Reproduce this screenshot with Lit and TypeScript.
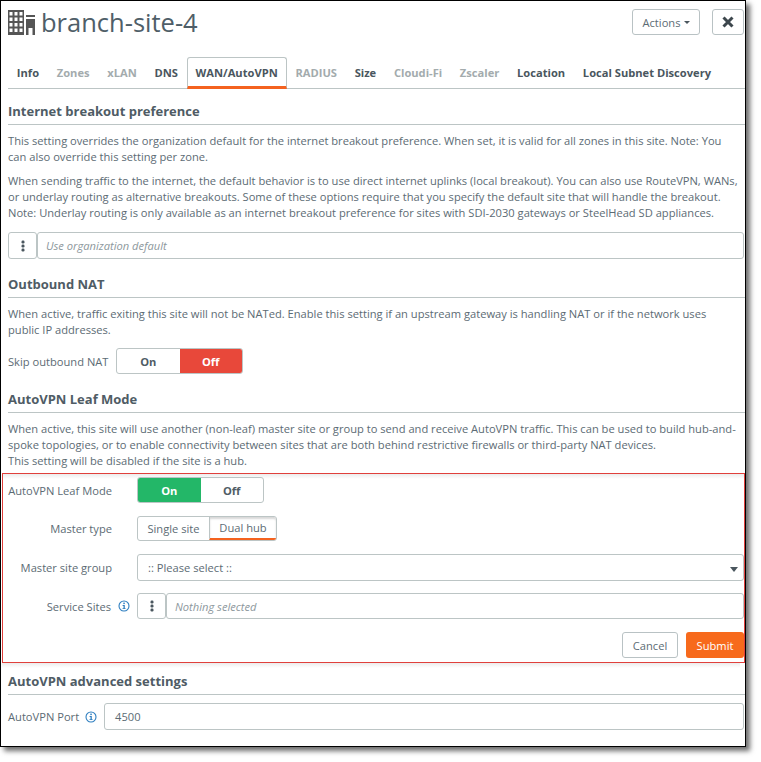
import { LitElement, html, css, svg } from "lit";
import { customElement } from "lit/decorators.js";

const info = html`<svg class="info" viewBox="0 0 12 12" width="12" height="12"><circle cx="6" cy="6" r="5" fill="none" stroke="#2f7fc0" stroke-width="1.1"/><rect x="5.3" y="2.6" width="1.5" height="1.5" fill="#2f7fc0"/><path d="M4.6 5h2.2v3.2h.8v.9H4.5v-.9h1V5.900h-.9z" fill="#2f7fc0"/></svg>`;
const dots = html`<svg viewBox="0 0 4 12" width="4" height="12"><rect x="0.500" y="0.500" width="3" height="3" rx="1.200" fill="#4a565e"/><rect x="0.500" y="4.500" width="3" height="3" rx="1.200" fill="#4a565e"/><rect x="0.500" y="8.500" width="3" height="3" rx="1.200" fill="#4a565e"/></svg>`;
const cells = [0, 1, 2].flatMap((c) => [0, 1, 2, 3].map((r) => svg`<rect x="${1.5 + c * 5}" y="${2 + r * 5.500}" width="3" height="3.500" fill="#fff"/>`));

@customElement("app-root")
export class AppRoot extends LitElement {
  static styles = css`
    :host { display: block; width: 761px; height: 762px; background: #fff; font-family: "Open Sans", sans-serif; font-size: 11.15px; color: #5c6b74; overflow: hidden; }
    * { box-sizing: border-box; }
    .window { width: 746px; height: 747px; border: 1px solid #000; box-shadow: 4px 4px 5px #6d6d6d; background: #fff; padding: 8px 1px 0 7px; }
    .top { display: flex; align-items: center; height: 26px; }
    .title { font-size: 25.5px; line-height: 26px; color: #4f5e68; margin-left: 6px; flex: 1; }
    .btn { height: 26px; border: 1px solid #b9c2c4; border-radius: 3px; background: #fff; display: flex; align-items: center; justify-content: center; color: #5c6b74; }
    .actions { width: 68px; margin-right: 12px; gap: 3px; }
    .caret { width: 0; height: 0; border: 3px solid transparent; border-top-color: #4a565e; border-bottom: 0; }
    .close { width: 32px; }
    .tabs { display: flex; margin: 22px 0 0 0; height: 32px; width: 737px; border-bottom: 1px solid #bcc5c5; }
    .tab { padding: 0 8.850px; height: 32px; line-height: 32px; font-weight: 700; color: #4a565e; white-space: nowrap; }
    .tab.dim { color: #a3abad; }
    .tab.active { border: 1px solid #bcc5c5; border-bottom: 3px solid #f4621f; border-radius: 3px 3px 0 0; padding: 0 7.850px; line-height: 29px; background: #fff; }
    h3 { margin: 0; font-size: 13px; font-weight: 700; color: #4f5c65; height: 27px; line-height: 26px; border-bottom: 1px solid #bcc5c5; width: 737px; }
    p { margin: 0; line-height: 16px; width: 732px; }
    .combo { display: flex; height: 27px; width: 736px; }
    .dotbtn { width: 29px; flex: none; border: 1px solid #bcc5c5; border-radius: 3px; display: flex; align-items: center; justify-content: center; background: #fff; }
    .field { flex: 1; border: 1px solid #bcc5c5; border-radius: 3px; display: flex; align-items: center; padding-left: 8px; font-style: italic; color: #8d989d; min-width: 0; position: relative; background: #fff; }
    .field.plain { font-style: normal; color: #5c6b74; padding-left: 10px; }
    .inline { display: flex; align-items: center; }
    .skip { width: 101px; white-space: nowrap; }
    .toggle { display: flex; width: 127px; height: 26px; border: 1px solid #bcc5c5; border-radius: 3px; overflow: hidden; font-weight: 700; color: #4f5c65; }
    .toggle > div { flex: 1; display: flex; align-items: center; justify-content: center; }
    .toggle .red { background: #e8483a; color: #fff; }
    .toggle .green { background: #23b768; color: #fff; }
    .box { margin-left: -6px; width: 743px; height: 190px; border: 1px solid #e0403c; background: linear-gradient(#ececec, #fff 5px); padding: 3px 0 0 0; display: grid; grid-template-columns: 109px 1fr; column-gap: 25px; grid-auto-rows: min-content; }
    .lbl { display: flex; align-items: center; justify-content: flex-end; gap: 7px; white-space: nowrap; }
    .lbl.w { margin-right: -18px; }
    .seg { display: flex; width: 140px; height: 25px; border: 1px solid #bcc5c5; border-radius: 3px; }
    .seg > div { display: flex; align-items: center; justify-content: center; }
    .seg .a { width: 71px; }
    .seg .b { flex: 1; border-left: 1px solid #bcc5c5; border-bottom: 2px solid #f4621f; box-shadow: inset 0 2px 2px #d8d8d8; border-radius: 0 2px 2px 0; }
    .selectarrow { position: absolute; right: 5px; top: 12px; width: 0; height: 0; border: 4.500px solid transparent; border-top: 5px solid #4a565e; border-bottom: 0; }
    .r13 { margin-top: 13px; }
    .r12 { margin-top: 12px; }
    .actions-row { grid-column: 1 / 3; display: flex; justify-content: flex-end; gap: 8px; margin-top: 13px; }
    .cancel { width: 56px; height: 26px; }
    .submit { width: 58px; height: 26px; background: #f76a1c; color: #fff; border-radius: 3px; display: flex; align-items: center; justify-content: center; }
    .after { height: 5px; width: 738px; margin-left: -6px; background: linear-gradient(#ececec, #fff); }
  `;

  render() {
    return html`<div class="window">
      <div class="top">
        <svg width="27" height="25" viewBox="0 0 27 25"><rect x="0" y="0" width="16" height="25" fill="#555"/>${cells}<rect x="18" y="5" width="9" height="2" fill="#555"/><path d="M18 9h9v16h-2.500v-7h-4v7H18z" fill="#555"/></svg>
        <div class="title">branch-site-4</div>
        <div class="btn actions">Actions <span class="caret"></span></div>
        <div class="btn close"><svg width="12" height="12" viewBox="0 0 12 12"><path d="M1.500 1.500l9 9M10.500 1.500l-9 9" stroke="#3d474d" stroke-width="3"/></svg></div>
      </div>
      <div class="tabs">
        <div class="tab">Info</div><div class="tab dim">Zones</div><div class="tab dim">xLAN</div><div class="tab">DNS</div><div class="tab active">WAN/AutoVPN</div><div class="tab dim">RADIUS</div><div class="tab">Size</div><div class="tab dim">Cloudi-Fi</div><div class="tab dim">Zscaler</div><div class="tab">Location</div><div class="tab">Local Subnet Discovery</div>
      </div>
      <h3 style="margin-top:9px">Internet breakout preference</h3>
      <p style="margin-top:8px">This setting overrides the organization default for the internet breakout preference. When set, it is valid for all zones in this site. Note: You can also override this setting per zone.</p>
      <p style="margin-top:8px">When sending traffic to the internet, the default behavior is to use direct internet uplinks (local breakout). You can also use RouteVPN, WANs, or underlay routing as alternative breakouts. Some of these options require that you specify the default site that will handle the breakout. Note: Underlay routing is only available as an internet breakout preference for sites with SDI-2030 gateways or SteelHead SD appliances.</p>
      <div class="combo" style="margin-top:11px"><div class="dotbtn">${dots}</div><div class="field">Use organization default</div></div>
      <h3 style="margin-top:12px">Outbound NAT</h3>
      <p style="margin-top:8px">When active, traffic exiting this site will not be NATed. Enable this setting if an upstream gateway is handling NAT or if the network uses public IP addresses.</p>
      <div class="inline" style="margin-top:10px;gap:7px"><span class="skip">Skip outbound NAT</span><div class="toggle"><div>On</div><div class="red">Off</div></div></div>
      <h3 style="margin-top:12px">AutoVPN Leaf Mode</h3>
      <p style="margin-top:8px">When active, this site will use another (non-leaf) master site or group to send and receive AutoVPN traffic. This can be used to build hub-and-spoke topologies, or to enable connectivity between sites that are both behind restrictive firewalls or third-party NAT devices.<br>This setting will be disabled if the site is a hub.</p>
      <div class="box" style="margin-top:4px">
        <div class="lbl">AutoVPN Leaf Mode</div><div><div class="toggle"><div class="green">On</div><div>Off</div></div></div>
        <div class="lbl r13">Master type</div><div class="r13"><div class="seg"><div class="a">Single site</div><div class="b">Dual hub</div></div></div>
        <div class="lbl r13">Master site group</div><div class="r13"><div class="field plain" style="height:27px;width:607px">:: Please select ::<span class="selectarrow"></span></div></div>
        <div class="lbl w r12">Service Sites ${info}</div><div class="r12"><div class="combo" style="width:607px;height:26px"><div class="dotbtn">${dots}</div><div class="field">Nothing selected</div></div></div>
        <div class="actions-row"><div class="btn cancel">Cancel</div><div class="submit">Submit</div></div>
      </div>
      <div class="after"></div>
      <h3>AutoVPN advanced settings</h3>
      <div class="inline" style="margin-top:8px;gap:6px"><span>AutoVPN Port</span>${info}<div class="field plain" style="height:27px;margin-left:1px">4500</div></div>
    </div>`;
  }
}
